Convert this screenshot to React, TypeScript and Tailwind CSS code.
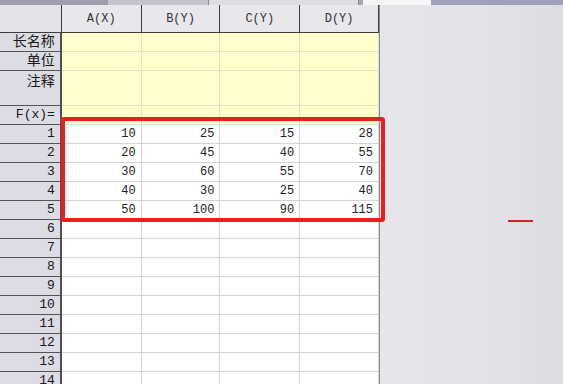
import { FC } from "react";

type TRow = {
  label: string;
  cells: string[];
  height: string;
  kind: "label" | "data";
  alignTop?: boolean;
};

const widths = ["w-[80px]", "w-[79px]", "w-[80px]", "w-[79px]"];
const headers = ["A(X)", "B(Y)", "C(Y)", "D(Y)"];

const data = [
  ["10", "25", "15", "28"],
  ["20", "45", "40", "55"],
  ["30", "60", "55", "70"],
  ["40", "30", "25", "40"],
  ["50", "100", "90", "115"],
];

const rows: TRow[] = [
  { label: "长名称", cells: ["", "", "", ""], height: "h-[19px]", kind: "label" },
  { label: "单位", cells: ["", "", "", ""], height: "h-[19px]", kind: "label" },
  { label: "注释", cells: ["", "", "", ""], height: "h-[35px]", kind: "label", alignTop: true },
  { label: "F(x)=", cells: ["", "", "", ""], height: "h-[19px]", kind: "label" },
  ...Array.from({ length: 14 }, (_, i) => ({
    label: String(i + 1),
    cells: data[i] ?? ["", "", "", ""],
    height: "h-[19px]",
    kind: "data" as const,
  })),
];

const mono = { fontFamily: '"Liberation Mono", "Noto Sans CJK SC", monospace' };
const cjk = { fontFamily: '"Liberation Mono", "Noto Sans CJK SC", sans-serif' };

const TopStrip: FC = () => (
  <div className="flex h-[5px] w-full shrink-0">
    <div className="w-[108px] bg-[#9e9eae]" />
    <div className="w-[100px] bg-[#c4c4cc]" />
    <div className="w-[151px] border-x border-[#8a8a90] bg-[#dedee0]" />
    <div className="w-[4px] bg-[#a8a8b0]" />
    <div className="w-[68px] bg-[#f6f6f6]" />
    <div className="flex-1 bg-[#a0a0bc]" />
  </div>
);

const Sheet: FC = () => (
  <div className="w-[380px] shrink-0 border-r border-[#8c8c8c]">
    <div className="flex h-[28px]">
      <div className="w-[62px] border-r border-b border-[#3c3c3c] bg-[#e4e4e8]" />
      {headers.map((h, i) => (
        <div
          key={h}
          className={`${widths[i]} flex items-center justify-center border-r border-b border-[#3c3c3c] bg-[#e8e8ec] text-[12px] text-[#333]`}
          style={mono}
        >
          {h}
        </div>
      ))}
    </div>
    {rows.map((row) => (
      <div key={row.label} className={`flex ${row.height}`}>
        <div
          className={`flex w-[62px] justify-end border-r-2 border-b border-r-[#505050] border-b-[#555] bg-[#dcdce4] pr-[5px] text-[#1a1a1a] ${
            row.alignTop ? "items-start pt-[1px]" : "items-center"
          } ${row.kind === "label" && row.label !== "F(x)=" ? "text-[14px]" : "text-[13px]"}`}
          style={cjk}
        >
          {row.label}
        </div>
        {row.cells.map((c, i) => (
          <div
            key={i}
            className={`${widths[i]} flex items-center justify-end border-r border-b pr-[5px] text-[12px] text-[#222] ${
              row.kind === "label"
                ? "border-[#e2e2c4] bg-[#ffffcc]"
                : "border-[#d4d4d4] bg-white"
            }`}
            style={mono}
          >
            {c}
          </div>
        ))}
      </div>
    ))}
  </div>
);

const App: FC = () => {
  return (
    <div className="relative flex h-[384px] w-[563px] flex-col overflow-hidden bg-[#dedee4]">
      <TopStrip />
      <div className="flex min-h-0 flex-1">
        <Sheet />
        <div className="flex-1 bg-gradient-to-r from-[#e6e6ea] via-[#e4e4e8] to-[#dcdce2]" />
      </div>
      {/* annotation overlays */}
      <div className="absolute left-[61px] top-[117px] h-[105px] w-[324px] rounded-[3px] border-[4px] border-[#ee1c1c]" />
      <div className="absolute left-[508px] top-[220px] h-[2px] w-[25px] bg-[#d42020]" />
    </div>
  );
};

export default App;
